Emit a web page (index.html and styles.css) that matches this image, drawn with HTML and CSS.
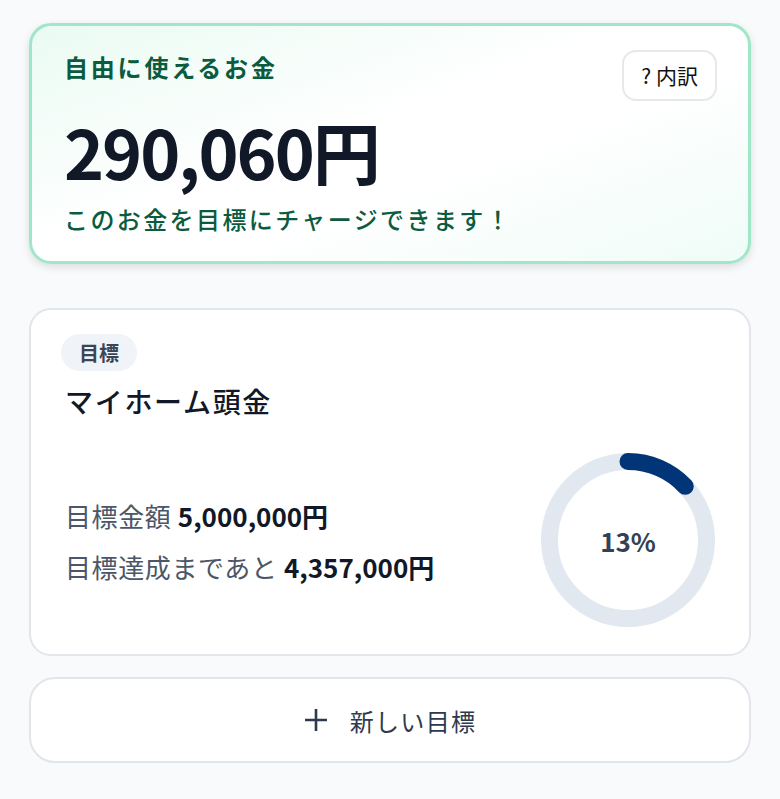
FILE: index.html
```html
<!DOCTYPE html>
<html lang="ja">
<head>
    <meta charset="UTF-8">
    <title>目標</title>
    <link rel="stylesheet" href="styles.css">
</head>
<body>
    <div class="page">
        <div class="free-card">
            <div class="free-head">
                <h2 class="free-title">自由に使えるお金</h2>
                <a href="javascript:;" class="detail-btn">? 内訳</a>
            </div>
            <div class="free-amount">290,060円</div>
            <p class="free-note">このお金を目標にチャージできます！</p>
        </div>

        <div class="goal-card">
            <span class="goal-tag">目標</span>
            <h3 class="goal-name">マイホーム頭金</h3>
            <div class="goal-body">
                <div class="goal-info">
                    <p>目標金額 <b>5,000,000円</b></p>
                    <p>目標達成まであと <b>4,357,000円</b></p>
                </div>
                <div class="ring">
                    <svg width="174" height="174" viewBox="0 0 174 174">
                        <circle class="ring-track" cx="87" cy="87" r="78.5"></circle>
                        <circle class="ring-bar" cx="87" cy="87" r="78.5" stroke-dasharray="64.1 500" transform="rotate(-90 87 87)"></circle>
                    </svg>
                    <span class="ring-text">13%</span>
                </div>
            </div>
        </div>

        <a href="javascript:;" class="add-btn">
            <svg width="24" height="24" viewBox="0 0 24 24"><path d="M12 1v22M1 12h22" stroke="#2d3a4e" stroke-width="2.6" fill="none"/></svg>
            <span>新しい目標</span>
        </a>
    </div>
</body>
</html>
```

FILE: styles.css
```css
*{margin: 0;padding: 0;box-sizing: border-box}
body{
    background-color: #f8fafc;
    font-family: "Noto Sans CJK JP", "Noto Sans", sans-serif;
}
.page{
    display: flex;
    flex-direction: column;
    padding: 23px 29px 0 29px;
}
.free-card{
    border: 3px solid #9fe7c8;
    border-radius: 22px;
    background: linear-gradient(160deg, #eafbf3 0%, #ffffff 45%, #ffffff 60%, #effcf8 100%);
    box-shadow: 0 3px 8px rgba(0, 0, 0, 0.12);
    padding: 24px 31px 0 32px;
    height: 241px;
}
.free-head{
    display: flex;
    justify-content: space-between;
    align-items: flex-start;
}
.free-title{
    margin-top: 1px;
    font-size: 24px;
    line-height: 32px;
    letter-spacing: 2.8px;
    font-weight: 700;
    color: #0b5b3e;
}
.detail-btn{
    display: block;
    height: 51px;
    line-height: 47px;
    padding: 0 17px;
    border: 2px solid #e6e8ec;
    border-radius: 14px;
    background-color: #fff;
    color: #111;
    text-decoration: none;
    font-size: 21px;
}
.free-amount{
    margin-top: 8px;
    font-size: 68px;
    line-height: 84px;
    font-weight: 700;
    letter-spacing: -2px;
    color: #111827;
}
.free-note{
    margin-top: 9px;
    font-size: 24px;
    line-height: 34px;
    letter-spacing: 2.4px;
    font-weight: 500;
    color: #0b5b3e;
}
.goal-card{
    margin-top: 44px;
    border: 2px solid #e2e5ea;
    border-radius: 22px;
    background-color: #fff;
    padding: 24px 34px 27px 30px;
}
.goal-tag{
    display: inline-block;
    height: 37px;
    line-height: 37px;
    padding: 0 18px;
    border-radius: 19px;
    background-color: #f0f3f7;
    color: #3a4556;
    font-size: 20px;
    font-weight: 700;
}
.goal-name{
    margin-top: 10px;
    padding-left: 4px;
    font-size: 28px;
    line-height: 40px;
    letter-spacing: 1.7px;
    font-weight: 500;
    color: #111827;
}
.goal-body{
    margin-top: 32px;
    display: flex;
    justify-content: space-between;
    align-items: center;
}
.goal-info{
    padding-left: 4px;
    padding-top: 2px;
    font-size: 26px;
    line-height: 34px;
    letter-spacing: 0.6px;
    color: #4b5668;
}
.goal-info p + p{
    margin-top: 17px;
}
.goal-info b{
    color: #111827;
    font-weight: 700;
    letter-spacing: 0;
}
.ring{
    position: relative;
    width: 174px;
    height: 174px;
}
.ring svg{
    display: block;
}
.ring-track{
    fill: none;
    stroke: #e2e8f0;
    stroke-width: 17;
}
.ring-bar{
    fill: none;
    stroke: #023578;
    stroke-width: 17;
    stroke-linecap: round;
}
.ring-text{
    position: absolute;
    left: 0;
    top: 0;
    width: 100%;
    height: 100%;
    display: flex;
    align-items: center;
    justify-content: center;
    font-size: 26px;
    font-weight: 700;
    color: #334155;
}
.add-btn{
    margin-top: 21px;
    height: 86px;
    display: flex;
    align-items: center;
    justify-content: center;
    gap: 22px;
    border: 2px solid #e2e5ea;
    border-radius: 26px;
    background-color: #fff;
    color: #2d3a4e;
    text-decoration: none;
    font-size: 24px;
    letter-spacing: 1.3px;
}
```
